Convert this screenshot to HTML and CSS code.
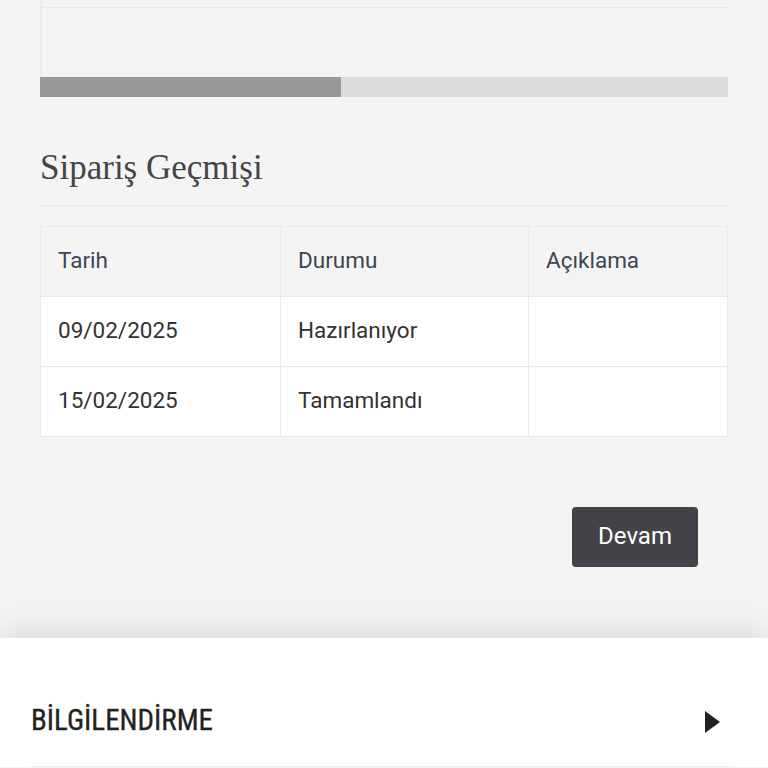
FILE: index.html
```html
<!DOCTYPE html>
<html lang="tr">
<head>
<meta charset="utf-8">
<link rel="stylesheet" href="styles.css">
</head>
<body>
<div class="page">
  <div class="prev-box">
    <div class="prev-top"></div>
    <div class="prev-body"></div>
  </div>
  <div class="progress"><div class="progress-fill" style="width:43.8%"></div></div>

  <h2 class="title">Sipariş Geçmişi</h2>

  <table class="history">
    <thead>
      <tr><th class="c1">Tarih</th><th class="c2">Durumu</th><th class="c3">Açıklama</th></tr>
    </thead>
    <tbody>
      <tr><td>09/02/2025</td><td>Hazırlanıyor</td><td></td></tr>
      <tr><td>15/02/2025</td><td>Tamamlandı</td><td></td></tr>
    </tbody>
  </table>

  <div class="actions"><button class="btn">Devam</button></div>
</div>

<div class="panel">
  <div class="panel-row">
    <span class="panel-label">BİLGİLENDİRME</span>
    <svg class="arrow" width="15" height="22" viewBox="0 0 15 22"><polygon points="0,0 15,11 0,22" fill="#222"/></svg>
  </div>
</div>
</body>
</html>
```

FILE: styles.css
```css
html, body {
  margin: 0;
  padding: 0;
  background: #f4f4f4;
}
.page {
  padding: 0 40px;
}
.prev-box {
  border-left: 2px solid #ecece6;
  height: 77px;
  box-sizing: border-box;
}
.prev-top {
  height: 7px;
  border-bottom: 1px solid #e8e8df;
}
.progress {
  height: 20px;
  background: #dcdcdc;
}
.progress-fill {
  height: 100%;
  background: #999999;
}
.title {
  margin: 51px 0 0;
  padding-bottom: 17px;
  border-bottom: 1px solid #e9e9e2;
  font-family: "Liberation Serif", serif;
  font-weight: normal;
  font-size: 35px;
  line-height: 40px;
  color: #454545;
}
.history {
  margin-top: 20px;
  width: 100%;
  border-collapse: collapse;
  font-family: Roboto, sans-serif;
  font-size: 22.5px;
}
.history th, .history td {
  border: 1px solid #ebebe1;
  height: 70px;
  padding: 0 17px 3px;
  box-sizing: border-box;
  text-align: left;
  vertical-align: middle;
}
.history th {
  font-weight: normal;
  color: #3b4652;
  background: #f4f4f4;
}
.history td {
  color: #333;
  background: #ffffff;
}
.c1 { width: 240px; }
.c2 { width: 248px; }
.actions {
  display: flex;
  justify-content: flex-end;
  padding-right: 30px;
  margin-top: 70px;
}
.btn {
  width: 126px;
  height: 60px;
  border: none;
  border-radius: 4px;
  background: #434249;
  color: #fff;
  font-family: Roboto, sans-serif;
  font-size: 24px;
  padding: 0 0 3px;
}
.panel {
  margin-top: 71px;
  background: #fff;
  box-shadow: 0 -8px 28px rgba(0,0,0,0.10);
  padding: 0 33px 0 31px;
}
.panel-row {
  display: flex;
  align-items: center;
  justify-content: space-between;
  padding: 60px 15px 24px 0;
  border-bottom: 1px solid #efefef;
}
.panel-label {
  font-family: "Liberation Sans Narrow", "Roboto Condensed", Roboto, sans-serif;
  font-size: 29px;
  line-height: 44px;
  color: #222;
  -webkit-text-stroke: 0.3px #222;
}
.arrow {
  display: block;
  margin-top: 4px;
}
```
